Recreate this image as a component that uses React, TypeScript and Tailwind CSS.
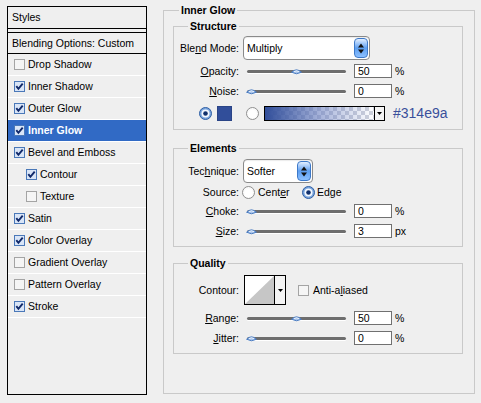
import React from "react";

type CheckProps = { checked: boolean };

function Check({ checked }: CheckProps) {
  return (
    <svg width="11" height="11" viewBox="0 0 11 11" className="block shrink-0">
      <rect
        x="0.5"
        y="0.5"
        width="10"
        height="10"
        fill={checked ? "#d9e5f7" : "#f5f5f5"}
        stroke={checked ? "#4a78b8" : "#a4a4a4"}
      />
      {checked && (
        <path d="M2.3 5.2 L4.4 7.8 L8.7 2.6" fill="none" stroke="#10296a" strokeWidth="1.9" />
      )}
    </svg>
  );
}

function Radio({ checked }: { checked: boolean }) {
  return (
    <svg width="13" height="13" viewBox="0 0 13 13" className="block shrink-0">
      {checked ? (
        <>
          <circle cx="6.5" cy="6.5" r="6" fill="#7aa5dd" stroke="#2f5ea3" />
          <circle cx="6.5" cy="6.5" r="4" fill="#f4f8fe" />
          <circle cx="6.5" cy="6.5" r="2.3" fill="#10306c" />
        </>
      ) : (
        <>
          <circle cx="6.5" cy="6.5" r="6" fill="#fafafa" stroke="#8e8e8e" />
          <circle cx="6.5" cy="7" r="4.2" fill="#ffffff" />
        </>
      )}
    </svg>
  );
}

function Thumb() {
  return (
    <svg width="11" height="7" viewBox="0 0 11 7" className="block">
      <path d="M0.6 4.3 Q5.5 -0.6 10.4 4.3 Q5.5 7.2 0.6 4.3 Z" fill="#a9c5ec" stroke="#4a7bc0" strokeWidth="1" />
      <path d="M3 3.6 Q5.5 2 8 3.6" fill="none" stroke="#ffffff" strokeWidth="0.8" />
    </svg>
  );
}

function Slider({ pos }: { pos: number }) {
  return (
    <div className="relative w-[111px] h-[14px] flex items-center shrink-0">
      <div className="ml-[4px] w-[99px] h-[3px] rounded-full bg-[#6e6e6e] shadow-[0_1px_0_#ffffff]" />
      <div className="absolute top-[4px]" style={{ left: 3 + pos * 0.9 }}>
        <Thumb />
      </div>
    </div>
  );
}

function NumBox({ value }: { value: string }) {
  return (
    <div className="w-[38px] h-[14px] border border-[#707070] bg-white pl-[3px] flex items-center shrink-0 leading-[12px]">
      {value}
    </div>
  );
}

function Spinner() {
  return (
    <div className="mr-[1px] w-[14px] h-[20px] rounded-[4px] border border-[#3d79c9] bg-linear-to-b from-[#e3efff] via-[#5c9ef0] to-[#8cc0ff] flex items-center justify-center">
      <svg width="6" height="11" viewBox="0 0 6 11" className="block">
        <path d="M0 4.5 L3 0.5 L6 4.5 Z" fill="#111" />
        <path d="M0 6.5 L3 10.5 L6 6.5 Z" fill="#111" />
      </svg>
    </div>
  );
}

function Select({ text, widthClass }: { text: string; widthClass: string }) {
  return (
    <div
      className={`ml-[4px] ${widthClass} h-[24px] rounded-[4px] border border-[#8a8a8a] bg-white flex items-center pl-[3px] shadow-[inset_0_1px_1px_rgba(0,0,0,0.08)]`}
    >
      <span className="flex-1">{text}</span>
      <Spinner />
    </div>
  );
}

function Label({ children }: { children: React.ReactNode }) {
  return <div className="w-[65px] text-right shrink-0 whitespace-nowrap">{children}</div>;
}

function SliderRow({
  label,
  value,
  pos,
  unit,
  rowClass,
}: {
  label: React.ReactNode;
  value: string;
  pos: number;
  unit: string;
  rowClass: string;
}) {
  return (
    <div className={`flex items-center h-[14px] ${rowClass}`}>
      <Label>{label}</Label>
      <div className="ml-[4px]">
        <Slider pos={pos} />
      </div>
      <NumBox value={value} />
      <span className="ml-[3px]">{unit}</span>
    </div>
  );
}

const styles = [
  { name: "Drop Shadow", on: false, sub: false, sel: false },
  { name: "Inner Shadow", on: true, sub: false, sel: false },
  { name: "Outer Glow", on: true, sub: false, sel: false },
  { name: "Inner Glow", on: true, sub: false, sel: true },
  { name: "Bevel and Emboss", on: true, sub: false, sel: false },
  { name: "Contour", on: true, sub: true, sel: false },
  { name: "Texture", on: false, sub: true, sel: false },
  { name: "Satin", on: true, sub: false, sel: false },
  { name: "Color Overlay", on: true, sub: false, sel: false },
  { name: "Gradient Overlay", on: false, sub: false, sel: false },
  { name: "Pattern Overlay", on: false, sub: false, sel: false },
  { name: "Stroke", on: true, sub: false, sel: false },
];

function LeftPanel() {
  return (
    <div className="ml-[7px] mt-[6px] w-[140px] h-[389px] border border-black flex flex-col shrink-0">
      <div className="h-[22px] border-b border-black pl-[4px] flex items-center">Styles</div>
      <div className="h-[3px]" />
      <div className="h-[22px] border-y border-black pl-[4px] flex items-center">Blending Options: Custom</div>
      {styles.map((s) => (
        <div
          key={s.name}
          className={
            s.sel
              ? "h-[22px] border-b border-white flex items-center bg-[#316ac5] text-white font-bold"
              : "h-[22px] border-b border-white flex items-center"
          }
        >
          <div className={s.sub ? "ml-[18px]" : "ml-[6px]"}>
            <Check checked={s.on} />
          </div>
          <span className="ml-[3px] whitespace-nowrap">{s.name}</span>
        </div>
      ))}
    </div>
  );
}

function Structure() {
  return (
    <fieldset className="ml-[9px] mt-[3px] w-[290px] border border-[#c9c9c9] pb-[8px] min-w-0">
      <legend className="ml-[14px] px-[2px] font-bold">Structure</legend>
      <div className="flex items-center h-[24px] mt-[3px]">
        <Label>
          Ble<span className="underline">n</span>d Mode:
        </Label>
        <Select text="Multiply" widthClass="w-[127px]" />
      </div>
      <SliderRow
        label={
          <>
            <span className="underline">O</span>pacity:
          </>
        }
        value="50"
        pos={50}
        unit="%"
        rowClass="mt-[4px]"
      />
      <SliderRow
        label={
          <>
            <span className="underline">N</span>oise:
          </>
        }
        value="0"
        pos={0}
        unit="%"
        rowClass="mt-[6px]"
      />
      <div className="flex items-center h-[16px] mt-[7px]">
        <div className="ml-[25px]">
          <Radio checked />
        </div>
        <div className="ml-[5px] w-[15px] h-[15px] bg-[#314e9a] border border-[#2a4486]" />
        <div className="ml-[14px]">
          <Radio checked={false} />
        </div>
        <div className="ml-[5px] w-[121px] h-[15px] border border-black flex">
          <div className="flex-1 bg-[conic-gradient(#cfd2dc_25%,#ffffff_0_50%,#cfd2dc_0_75%,#ffffff_0)] bg-[length:8px_8px]">
            <div className="h-full w-full bg-linear-to-r from-[#314e9a] via-[#6a7fc0]/60 to-transparent" />
          </div>
          <div className="w-[10px] border-l border-black bg-[#f4f4f4] flex items-center justify-center">
            <svg width="5" height="3" viewBox="0 0 5 3" className="block">
              <path d="M0 0 L5 0 L2.5 3 Z" fill="#000" />
            </svg>
          </div>
        </div>
        <span className="ml-[8px] text-[14px] leading-[16px] text-[#3a4f9b]">#314e9a</span>
      </div>
    </fieldset>
  );
}

function Elements() {
  return (
    <fieldset className="ml-[9px] mt-[12px] w-[290px] border border-[#c9c9c9] pb-[8px] min-w-0">
      <legend className="ml-[14px] px-[2px] font-bold">Elements</legend>
      <div className="flex items-center h-[24px] mt-[4px]">
        <Label>
          Tec<span className="underline">h</span>nique:
        </Label>
        <Select text="Softer" widthClass="w-[70px]" />
      </div>
      <div className="flex items-center h-[14px] mt-[2px]">
        <Label>Source:</Label>
        <div className="ml-[3px] w-[60px] flex items-center">
          <Radio checked={false} />
          <span className="ml-[3px]">
            Cent<span className="underline">e</span>r
          </span>
        </div>
        <Radio checked />
        <span className="ml-[2px]">
          Ed<span className="underline">g</span>e
        </span>
      </div>
      <SliderRow
        label={
          <>
            <span className="underline">C</span>hoke:
          </>
        }
        value="0"
        pos={0}
        unit="%"
        rowClass="mt-[5px]"
      />
      <SliderRow
        label={
          <>
            <span className="underline">S</span>ize:
          </>
        }
        value="3"
        pos={0}
        unit="px"
        rowClass="mt-[6px]"
      />
    </fieldset>
  );
}

function Quality() {
  return (
    <fieldset className="ml-[9px] mt-[10px] w-[290px] border border-[#c9c9c9] pb-[8px] min-w-0">
      <legend className="ml-[14px] px-[2px] font-bold">Quality</legend>
      <div className="flex items-center h-[30px] mt-[5px]">
        <Label>Contour:</Label>
        <div className="ml-[5px] w-[42px] h-[30px] border border-black bg-white flex">
          <svg width="29" height="28" viewBox="0 0 29 28" className="block">
            <rect width="29" height="28" fill="#ffffff" />
            <path d="M0 28 L29 0 L29 28 Z" fill="#c6c6c6" />
          </svg>
          <div className="flex-1 border-l border-black bg-[#f4f4f4] flex items-center justify-center">
            <svg width="5" height="3" viewBox="0 0 5 3" className="block">
              <path d="M0 0 L5 0 L2.5 3 Z" fill="#000" />
            </svg>
          </div>
        </div>
        <div className="ml-[12px]">
          <Check checked={false} />
        </div>
        <span className="ml-[4px]">
          Anti-a<span className="underline">l</span>iased
        </span>
      </div>
      <SliderRow
        label={
          <>
            <span className="underline">R</span>ange:
          </>
        }
        value="50"
        pos={50}
        unit="%"
        rowClass="mt-[6px]"
      />
      <SliderRow
        label={
          <>
            <span className="underline">J</span>itter:
          </>
        }
        value="0"
        pos={0}
        unit="%"
        rowClass="mt-[6px]"
      />
    </fieldset>
  );
}

export default function App() {
  return (
    <div className="w-[481px] h-[403px] overflow-hidden bg-[#efefef] flex items-start text-black text-[10.5px] leading-[13px] font-['Liberation_Sans',Arial,sans-serif]">
      <LeftPanel />
      <fieldset className="ml-[16px] mt-[4px] w-[312px] h-[390px] border border-[#c9c9c9] min-w-0">
        <legend className="ml-[15px] px-[2px] font-bold">Inner Glow</legend>
        <Structure />
        <Elements />
        <Quality />
      </fieldset>
    </div>
  );
}
